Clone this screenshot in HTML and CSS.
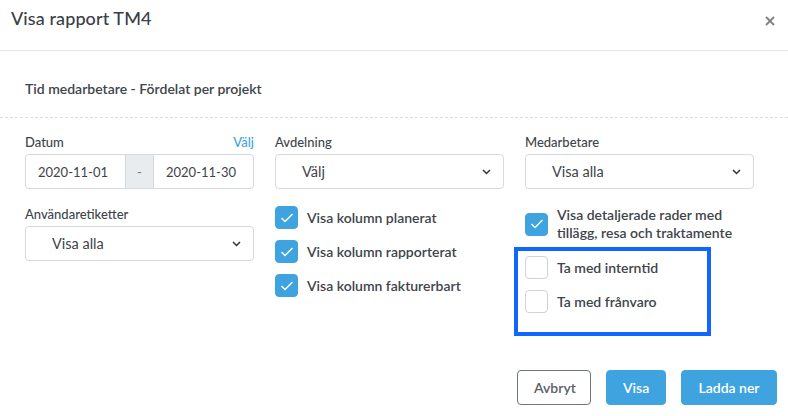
FILE: index.html
```html
<!DOCTYPE html>
<html lang="sv">
<head>
<meta charset="utf-8">
<link rel="stylesheet" href="styles.css">
</head>
<body>
<div class="modal">
  <header class="head">
    <h1 class="title">Visa rapport TM4</h1>
    <svg class="close" width="10" height="10" viewBox="0 0 10 10"><path d="M1 1L9 9M9 1L1 9" stroke="#808080" stroke-width="1.8"/></svg>
  </header>
  <div class="sub">Tid medarbetare - Fördelat per projekt</div>
  <div class="grid">
    <div class="col">
      <div class="field">
        <div class="lrow"><span class="label">Datum</span><a class="link">Välj</a></div>
        <div class="daterange">
          <div class="dbox">2020-11-01</div>
          <div class="dsep">-</div>
          <div class="dbox">2020-11-30</div>
        </div>
      </div>
      <div class="field f2">
        <div class="lrow"><span class="label">Användaretiketter</span></div>
        <div class="select"><span>Visa alla</span><svg class="chev" width="9" height="6" viewBox="0 0 9 6"><path d="M1 1l3.5 3.5L8 1" fill="none" stroke="#333" stroke-width="1.5"/></svg></div>
      </div>
    </div>
    <div class="col">
      <div class="field">
        <div class="lrow"><span class="label">Avdelning</span></div>
        <div class="select"><span>Välj</span><svg class="chev" width="9" height="6" viewBox="0 0 9 6"><path d="M1 1l3.5 3.5L8 1" fill="none" stroke="#333" stroke-width="1.5"/></svg></div>
      </div>
      <div class="checks">
        <label class="check"><span class="box on"><svg width="14" height="10" viewBox="0 0 14 10"><path d="M1.5 5l3.5 3.5L12.5 1" fill="none" stroke="#fff" stroke-width="1.4"/></svg></span><span>Visa kolumn planerat</span></label>
        <label class="check"><span class="box on"><svg width="14" height="10" viewBox="0 0 14 10"><path d="M1.5 5l3.5 3.5L12.5 1" fill="none" stroke="#fff" stroke-width="1.4"/></svg></span><span>Visa kolumn rapporterat</span></label>
        <label class="check"><span class="box on"><svg width="14" height="10" viewBox="0 0 14 10"><path d="M1.5 5l3.5 3.5L12.5 1" fill="none" stroke="#fff" stroke-width="1.4"/></svg></span><span>Visa kolumn fakturerbart</span></label>
      </div>
    </div>
    <div class="col">
      <div class="field">
        <div class="lrow"><span class="label">Medarbetare</span></div>
        <div class="select"><span>Visa alla</span><svg class="chev" width="9" height="6" viewBox="0 0 9 6"><path d="M1 1l3.5 3.5L8 1" fill="none" stroke="#333" stroke-width="1.5"/></svg></div>
      </div>
      <label class="check multi"><span class="box on"><svg width="14" height="10" viewBox="0 0 14 10"><path d="M1.5 5l3.5 3.5L12.5 1" fill="none" stroke="#fff" stroke-width="1.4"/></svg></span><span class="mtext">Visa detaljerade rader med tillägg, resa och traktamente</span></label>
      <div class="highlight">
        <label class="check"><span class="box"></span><span>Ta med interntid</span></label>
        <label class="check"><span class="box"></span><span>Ta med frånvaro</span></label>
      </div>
    </div>
  </div>
  <footer class="foot">
    <button class="btn ghost">Avbryt</button>
    <button class="btn primary">Visa</button>
    <button class="btn primary">Ladda ner</button>
  </footer>
</div>
</body>
</html>
```
FILE: styles.css
```css
* { box-sizing: border-box; }
html, body { margin: 0; padding: 0; background: #fff; }
body { font-family: "Lato", "Liberation Sans", sans-serif; color: #3e444b; width: 788px; height: 416px; overflow: hidden; }
.modal { width: 788px; }
.head { height: 51px; border-bottom: 1px solid #e6e6e6; display: flex; align-items: flex-start; justify-content: space-between; padding: 7px 13px 0 11px; }
.title { margin: 0; font-size: 18px; font-weight: 500; color: #3a4047; line-height: 22px; letter-spacing: 0.1px; }
.close { margin-top: 9px; }
.sub { height: 67px; border-bottom: 1px dashed #dcdcdc; padding: 29px 25px 0; font-size: 14px; font-weight: 600; color: #3e444b; }
.grid { display: grid; grid-template-columns: 229px 229px 229px; column-gap: 21px; padding: 16px 25px 0; }
.field { display: flex; flex-direction: column; }
.f2 { margin-top: 17px; }
.lrow { display: flex; justify-content: space-between; font-size: 13px; line-height: 16px; height: 20px; font-weight: 500; }
.label { color: #3e444b; }
.link { color: #3fa3df; font-size: 13px; }
.daterange { display: flex; height: 35px; border: 1px solid #d6d9dd; border-radius: 4px; overflow: hidden; font-size: 13px; }
.dbox { flex: 1; display: flex; align-items: center; padding-left: 12px; color: #3e444b; }
.dsep { width: 29px; background: #e9ecef; border-left: 1px solid #d6d9dd; border-right: 1px solid #d6d9dd; display: flex; align-items: center; justify-content: center; color: #777; }
.select { height: 35px; border: 1px solid #d6d9dd; border-radius: 4px; display: flex; align-items: center; justify-content: space-between; padding: 0 12px 0 26px; font-size: 14.5px; color: #3e444b; }
.chev { display: block; }
.checks { margin-top: 17px; display: flex; flex-direction: column; gap: 11px; }
.check { display: flex; align-items: center; gap: 9px; font-size: 14px; font-weight: 600; color: #3e444b; min-height: 23px; }
.box { width: 23px; height: 23px; border-radius: 4px; border: 1px solid #cfd3d8; background: #fff; flex: none; display: flex; align-items: center; justify-content: center; }
.box.on { background: #3fa3df; border-color: #3fa3df; }
.multi { margin-top: 17px; line-height: 18px; align-items: center; }
.mtext { width: 185px; }
.highlight { margin: 5px 0 0 -11px; width: 197px; height: 89px; border: 4px solid #1166ff; padding: 5px 0 0 7px; display: flex; flex-direction: column; gap: 11px; }
.foot { display: flex; justify-content: flex-end; gap: 15px; padding: 0 11px 0 0; margin-top: 34px; }
.btn { height: 35px; border-radius: 4px; font-family: inherit; font-size: 14px; font-weight: 600; padding: 0 16px; border: 1px solid transparent; }
.ghost { background: #fff; border-color: #6c757d; color: #5a6068; width: 74px; }
.primary { background: #3fa3df; border-color: #3fa3df; color: #fff; }
.primary:nth-child(2) { width: 60px; }
.primary:nth-child(3) { width: 96px; }
```
